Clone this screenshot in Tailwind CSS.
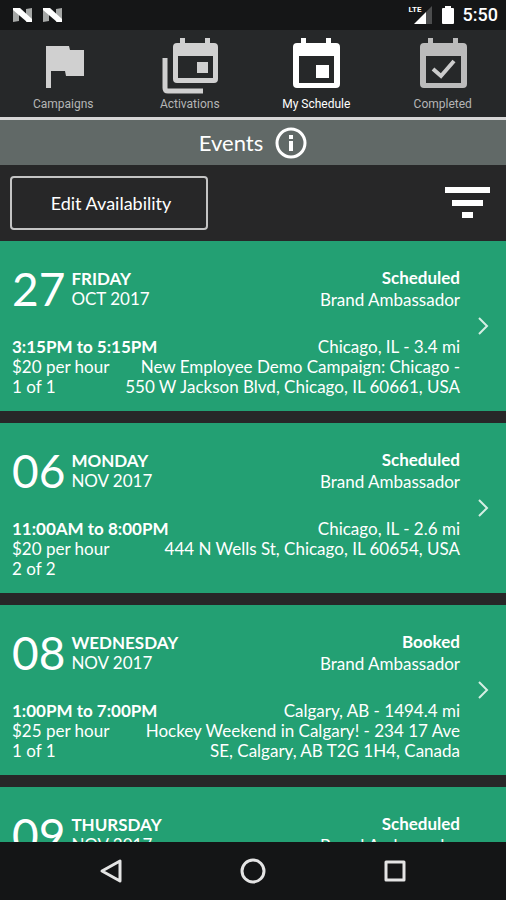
<!DOCTYPE html>
<html lang="en">
<head>
  <meta charset="UTF-8" />
  <meta name="viewport" content="width=device-width, initial-scale=1" />
  <title>My Schedule</title>
  <script src="https://cdn.jsdelivr.net/npm/@tailwindcss/browser@4"></script>
</head>
<body class="flex h-screen flex-col overflow-hidden bg-[#272728] font-['Lato',sans-serif] text-white">

  <!-- Status bar -->
  <div class="flex h-[30px] shrink-0 items-center justify-between bg-[#151617] pr-2 pl-3 font-['Roboto',sans-serif]">
    <div class="flex gap-2">
      <svg class="h-4 w-[22px]" viewBox="0 0 22 16"><path d="M1 2l6-1v13l-6 1zM14 2l6-1v13l-6 1z" fill="#a5a7a6"/><path d="M1 1h7l12 11v3h-5L1 3z" fill="#fff"/></svg>
      <svg class="h-4 w-[22px]" viewBox="0 0 22 16"><path d="M1 2l6-1v13l-6 1zM14 2l6-1v13l-6 1z" fill="#a5a7a6"/><path d="M1 1h7l12 11v3h-5L1 3z" fill="#fff"/></svg>
    </div>
    <div class="flex items-center">
      <div class="relative mr-2 h-5 w-6">
        <svg class="h-5 w-6" viewBox="0 0 24 20"><path d="M23 1v18h-6V7z" fill="#4c4d4e"/><path d="M17 7v12H5z" fill="#fff"/></svg>
        <span class="absolute top-0 left-0 bg-[#151617] text-[8px] leading-[10px] font-bold">LTE</span>
      </div>
      <svg class="mr-2 h-5 w-[14px]" viewBox="0 0 14 20"><path d="M4 1h6v2h2q1 0 1 1v14q0 1-1 1H2q-1 0-1-1V4q0-1 1-1h2z" fill="#fff"/></svg>
      <span class="text-lg leading-5 font-medium">5:50</span>
    </div>
  </div>

  <!-- Tabs -->
  <nav class="grid h-[90px] shrink-0 grid-cols-4 border-b-3 border-[#d6d6d6] bg-[#262829] pt-2 font-['Roboto',sans-serif] text-xs text-[#b5b6b6]">
    <a href="#campaigns" class="flex flex-col items-center">
      <svg class="h-[58px] w-[60px]" viewBox="0 0 60 58" fill="#d0d0d0"><path d="M13 8h23l1 4h14v26H33l-1-5H18v17h-5z"/></svg>
      <span class="leading-4">Campaigns</span>
    </a>
    <a href="#activations" class="flex flex-col items-center">
      <svg class="h-[58px] w-[60px]" viewBox="0 0 60 58"><path d="M5 20v30q0 3 3 3h35" fill="none" stroke="#d0d0d0" stroke-width="5"/><path fill="#d0d0d0" fill-rule="evenodd" d="M20 0h5v5h20V0h5v5h4q4 0 4 4v32q0 4-4 4H17q-4 0-4-4V9q0-4 4-4h3zM18 18v22h35V18z"/><path d="M37 24h11v11H37z" fill="#d0d0d0"/></svg>
      <span class="leading-4">Activations</span>
    </a>
    <a href="#schedule" aria-current="page" class="flex flex-col items-center text-white">
      <svg class="h-[58px] w-[60px]" viewBox="0 0 60 58"><path fill="#fff" fill-rule="evenodd" d="M15 0h5v5h20V0h5v5h5q4 0 4 4v37q0 4-4 4H11q-4 0-4-4V9q0-4 4-4h4zM13 18v27h35V18z"/><path fill="#fff" d="M30 27h13v13H30z"/></svg>
      <span class="leading-4">My Schedule</span>
    </a>
    <a href="#completed" class="flex flex-col items-center">
      <svg class="h-[58px] w-[60px]" viewBox="0 0 60 58"><path fill="#bbb" fill-rule="evenodd" d="M15 0h5v5h20V0h5v5h5q4 0 4 4v37q0 4-4 4H11q-4 0-4-4V9q0-4 4-4h4zM13 18v27h35V18z"/><path d="M20 31l8 7 13-15" fill="none" stroke="#ccc" stroke-width="4"/></svg>
      <span class="leading-4">Completed</span>
    </a>
  </nav>

  <!-- Title -->
  <header class="flex h-[45px] shrink-0 items-center justify-center gap-3 bg-[#616967]">
    <h1 class="text-[22px]">Events</h1>
    <button type="button" aria-label="About events">
      <svg class="h-8 w-8" viewBox="0 0 32 32"><circle cx="16" cy="16" r="14" fill="none" stroke="#fff" stroke-width="3"/><path d="M14 8h4v4h-4zM14 14h4v10h-4z" fill="#fff"/></svg>
    </button>
  </header>

  <!-- Toolbar -->
  <div class="flex h-[76px] shrink-0 items-center justify-between pr-4 pl-[10px]">
    <button type="button" class="h-[54px] w-[198px] rounded border-2 border-[#c4c4c4] pl-1 text-lg">Edit Availability</button>
    <button type="button" aria-label="Filter">
      <svg class="h-8 w-[46px]" viewBox="0 0 46 32" fill="#fff"><path d="M1 0h45v6H1zM8 13h31v6H8zM18 25h11v6H18z"/></svg>
    </button>
  </div>

  <!-- Events -->
  <main id="events" class="flex min-h-0 flex-1 flex-col gap-3 overflow-hidden text-[17px] leading-5">
    <!-- cards are rendered below -->
  </main>

  <!-- System navigation -->
  <div class="flex h-[58px] shrink-0 items-center justify-center gap-[110px] bg-[#141516]">
    <button type="button" aria-label="Back"><svg class="h-8 w-8" viewBox="0 0 32 32" fill="none" stroke="#e4e4e4" stroke-width="3" stroke-linejoin="round"><path d="M25 6v20L7 16z"/></svg></button>
    <button type="button" aria-label="Home"><svg class="h-8 w-8" viewBox="0 0 32 32" fill="none" stroke="#e4e4e4" stroke-width="3"><circle cx="16" cy="16" r="11"/></svg></button>
    <button type="button" aria-label="Recent apps"><svg class="h-8 w-8" viewBox="0 0 32 32" fill="none" stroke="#e4e4e4" stroke-width="3" stroke-linejoin="round"><path d="M7 7h18v18H7z"/></svg></button>
  </div>

  <script>
    const events = [
      { date: '27', day: 'FRIDAY', month: 'OCT 2017', status: 'Scheduled', time: '3:15PM to 5:15PM', pay: '$20 per hour', count: '1 of 1', city: 'Chicago, IL - 3.4 mi', address: 'New Employee Demo Campaign: Chicago - 550 W Jackson Blvd, Chicago, IL 60661, USA' },
      { date: '06', day: 'MONDAY', month: 'NOV 2017', status: 'Scheduled', time: '11:00AM to 8:00PM', pay: '$20 per hour', count: '2 of 2', city: 'Chicago, IL - 2.6 mi', address: '444 N Wells St, Chicago, IL 60654, USA' },
      { date: '08', day: 'WEDNESDAY', month: 'NOV 2017', status: 'Booked', time: '1:00PM to 7:00PM', pay: '$25 per hour', count: '1 of 1', city: 'Calgary, AB - 1494.4 mi', address: 'Hockey Weekend in Calgary! - 234 17 Ave SE, Calgary, AB T2G 1H4, Canada' },
      { date: '09', day: 'THURSDAY', month: 'NOV 2017', status: 'Scheduled', time: '', pay: '', count: '', city: '', address: '' }
    ];

    document.getElementById('events').innerHTML = events.map(e => `
      <a href="#event" class="flex min-h-[170px] shrink-0 items-center bg-[#23a073] pl-3">
        <div class="flex flex-1 flex-col gap-[26px] self-start pt-[26px] pb-[14px]">
          <div class="flex items-center justify-between">
            <div class="flex items-center gap-1.5">
              <span class="text-[46px] leading-10">${e.date}</span>
              <div>
                <p class="font-bold">${e.day}</p>
                <p>${e.month}</p>
              </div>
            </div>
            <div class="text-right leading-[22px]">
              <p class="font-bold">${e.status}</p>
              <p>Brand Ambassador</p>
            </div>
          </div>
          <div>
            <div class="flex justify-between">
              <p class="font-bold">${e.time}</p>
              <p>${e.city}</p>
            </div>
            <div class="flex justify-between gap-3">
              <div class="shrink-0">
                <p>${e.pay}</p>
                <p>${e.count}</p>
              </div>
              <p class="text-right">${e.address}</p>
            </div>
          </div>
        </div>
        <svg class="mx-[17px] h-5 w-3 shrink-0" viewBox="0 0 12 20" fill="none" stroke="#d5efe4" stroke-width="2"><path d="M2 2l8 8-8 8"/></svg>
      </a>`).join('');
  </script>

</body>
</html>
